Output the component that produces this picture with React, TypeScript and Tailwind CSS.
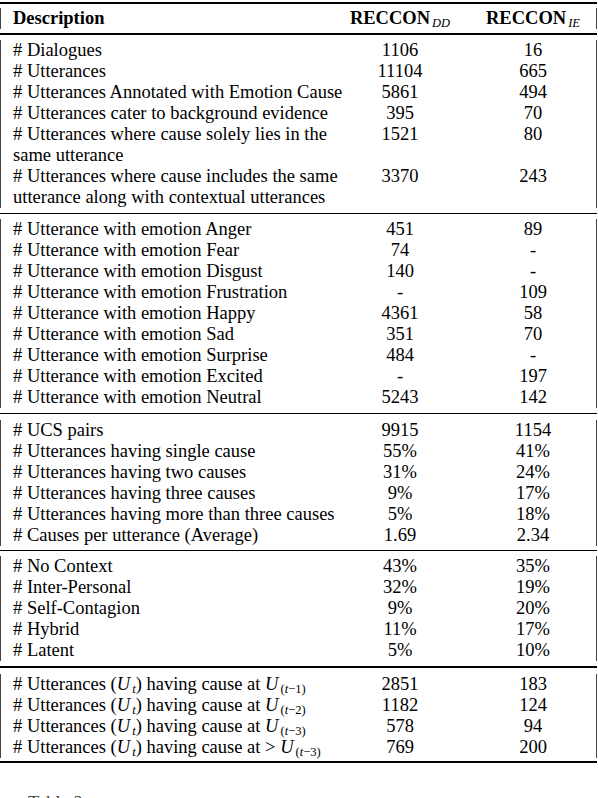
import React from "react";

type Row = { label: React.ReactNode; dd: string; ie: string; label2?: React.ReactNode };

const Sub: React.FC<{ children: React.ReactNode; italic?: boolean }> = ({ children, italic = true }) => (
  <span className={`relative top-[3px] pl-[2px] text-[12.5px] leading-none font-normal ${italic ? "italic" : ""}`}>
    {children}
  </span>
);

const Ut = () => (
  <>
    (<span className="italic">U</span>
    <Sub>t</Sub>)
  </>
);

const Uprev = ({ n }: { n: number }) => (
  <>
    <span className="italic">U</span>
    <Sub italic={false}>
      (<span className="italic">t</span>−{n})
    </Sub>
  </>
);

const groups: Row[][] = [
  [
    { label: "# Dialogues", dd: "1106", ie: "16" },
    { label: "# Utterances", dd: "11104", ie: "665" },
    { label: "# Utterances Annotated with Emotion Cause", dd: "5861", ie: "494" },
    { label: "# Utterances cater to background evidence", dd: "395", ie: "70" },
    { label: "# Utterances where cause solely lies in the", label2: "same utterance", dd: "1521", ie: "80" },
    {
      label: "# Utterances where cause includes the same",
      label2: "utterance along with contextual utterances",
      dd: "3370",
      ie: "243",
    },
  ],
  [
    { label: "# Utterance with emotion Anger", dd: "451", ie: "89" },
    { label: "# Utterance with emotion Fear", dd: "74", ie: "-" },
    { label: "# Utterance with emotion Disgust", dd: "140", ie: "-" },
    { label: "# Utterance with emotion Frustration", dd: "-", ie: "109" },
    { label: "# Utterance with emotion Happy", dd: "4361", ie: "58" },
    { label: "# Utterance with emotion Sad", dd: "351", ie: "70" },
    { label: "# Utterance with emotion Surprise", dd: "484", ie: "-" },
    { label: "# Utterance with emotion Excited", dd: "-", ie: "197" },
    { label: "# Utterance with emotion Neutral", dd: "5243", ie: "142" },
  ],
  [
    { label: "# UCS pairs", dd: "9915", ie: "1154" },
    { label: "# Utterances having single cause", dd: "55%", ie: "41%" },
    { label: "# Utterances having two causes", dd: "31%", ie: "24%" },
    { label: "# Utterances having three causes", dd: "9%", ie: "17%" },
    { label: "# Utterances having more than three causes", dd: "5%", ie: "18%" },
    { label: "# Causes per utterance (Average)", dd: "1.69", ie: "2.34" },
  ],
  [
    { label: "# No Context", dd: "43%", ie: "35%" },
    { label: "# Inter-Personal", dd: "32%", ie: "19%" },
    { label: "# Self-Contagion", dd: "9%", ie: "20%" },
    { label: "# Hybrid", dd: "11%", ie: "17%" },
    { label: "# Latent", dd: "5%", ie: "10%" },
  ],
  [
    { label: <># Utterances <Ut /> having cause at <Uprev n={1} /></>, dd: "2851", ie: "183" },
    { label: <># Utterances <Ut /> having cause at <Uprev n={2} /></>, dd: "1182", ie: "124" },
    { label: <># Utterances <Ut /> having cause at <Uprev n={3} /></>, dd: "578", ie: "94" },
    { label: <># Utterances <Ut /> having cause at &gt; <Uprev n={3} /></>, dd: "769", ie: "200" },
  ],
];

// margins around the rule that sits above each group after the first
const gaps = [
  ["mt-[4.5px]", "mt-[4.5px]"],
  ["mt-[5px]", "mt-[5.5px]"],
  ["mt-[4px]", "mt-[4.5px]"],
  ["mt-[5.5px]", "mt-[6px]"],
];

const Group: React.FC<{ rows: Row[] }> = ({ rows }) => (
  <div className="border-x-[1.5px] border-[#444]">
    {rows.map((r, i) => (
      <div key={i} className="flex">
        <div className="w-[344px] pl-[12px] whitespace-nowrap">
          <div>{r.label}</div>
          {r.label2 && <div>{r.label2}</div>}
        </div>
        <div className="w-[110px] text-center">{r.dd}</div>
        <div className="w-[24px]" />
        <div className="w-[108px] text-center">{r.ie}</div>
      </div>
    ))}
  </div>
);

export default function App() {
  return (
    <div className="w-[598px] h-[798px] overflow-hidden bg-white text-black font-['Liberation_Serif','Times_New_Roman',serif] text-[18.5px] leading-[21px]">
      <div className="w-[597px] pt-[2px]">
        <div className="h-[2px] bg-black" />
        <div className="mt-[4px] border-x-[1.5px] border-[#444] flex font-bold">
          <div className="w-[344px] pl-[12px]">Description</div>
          <div className="w-[110px] text-center">
            RECCON<Sub>DD</Sub>
          </div>
          <div className="w-[24px]" />
          <div className="w-[108px] text-center">
            RECCON<Sub>IE</Sub>
          </div>
        </div>
        <div className="mt-[4px] h-[1.5px] bg-black" />
        <div className="mt-[5.5px]">
          <Group rows={groups[0]} />
        </div>
        {groups.slice(1).map((g, i) => (
          <div key={i}>
            <div className={`${gaps[i][0]} h-[1.5px] bg-black`} />
            <div className={gaps[i][1]}>
              <Group rows={g} />
            </div>
          </div>
        ))}
        <div className="mt-[3.5px] h-[2px] bg-black" />
        <div className="mt-[30px] pl-[28px] text-[#444]">Table 2:</div>
      </div>
    </div>
  );
}
